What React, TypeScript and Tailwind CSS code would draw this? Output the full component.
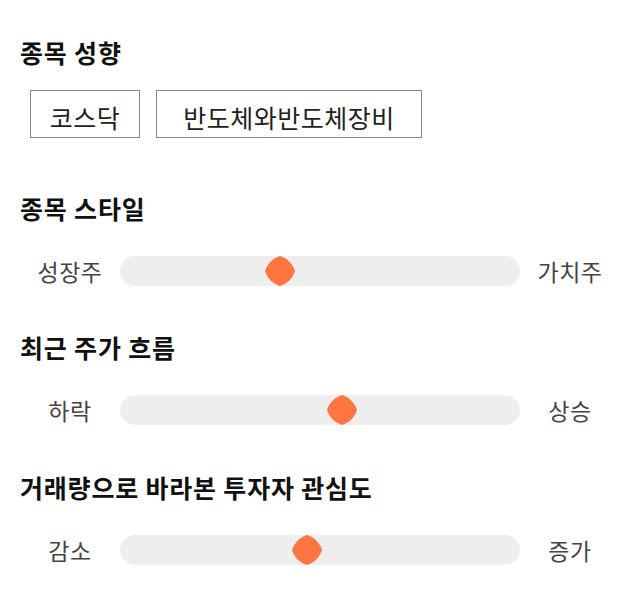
const font = { fontFamily: '"Noto Sans CJK KR", "Noto Sans", sans-serif' };

type Row = { title: string; left: string; right: string; value: number; mt: string };

const rows: Row[] = [
  { title: "종목 스타일", left: "성장주", right: "가치주", value: 0.392, mt: "mt-[54px]" },
  { title: "최근 주가 흐름", left: "하락", right: "상승", value: 0.559, mt: "mt-[45px]" },
  { title: "거래량으로 바라본 투자자 관심도", left: "감소", right: "증가", value: 0.465, mt: "mt-[46px]" },
];

const Thumb = ({ value }: { value: number }) => (
  <svg
    width="30"
    height="30"
    viewBox="0 0 30 30"
    className="absolute top-0"
    style={{ left: `${value * 370}px` }}
  >
    <path
      d="M15 0C22 2 28 8 30 15C28 22 22 28 15 30C8 28 2 22 0 15C2 8 8 2 15 0Z"
      fill="#ff7640"
    />
  </svg>
);

const Slider = ({ row }: { row: Row }) => (
  <div className="mt-[32px] flex h-[30px] items-center">
    <div className="w-[100px] text-center text-[23px] leading-[30px] tracking-[0.5px] text-[#444]">{row.left}</div>
    <div className="relative h-[30px] w-[400px] rounded-full bg-[#eeeeee]">
      <Thumb value={row.value} />
    </div>
    <div className="w-[100px] text-center text-[23px] leading-[30px] tracking-[0.5px] text-[#444]">{row.right}</div>
  </div>
);

export default function App() {
  return (
    <div className="min-h-[606px] w-[640px] bg-white pl-[20px] pt-[36px]" style={font}>
      <h2 className="h-[32px] text-[25px] font-bold leading-[32px] tracking-[0.8px] text-[#111]">종목 성향</h2>
      <div className="ml-[10px] mt-[22px] flex gap-4">
        <span className="flex h-[48px] w-[110px] items-center justify-center border border-[#888] pt-[8px] text-[25px] tracking-[0.5px] text-[#222]">코스닥</span>
        <span className="flex h-[48px] w-[266px] items-center justify-center border border-[#888] pt-[8px] text-[25px] tracking-[0.5px] text-[#222]">반도체와반도체장비</span>
      </div>
      {rows.map((r) => (
        <section key={r.title} className={r.mt}>
          <h2 className="h-[32px] text-[25px] font-bold leading-[32px] tracking-[0.8px] text-[#111]">{r.title}</h2>
          <Slider row={r} />
        </section>
      ))}
    </div>
  );
}
